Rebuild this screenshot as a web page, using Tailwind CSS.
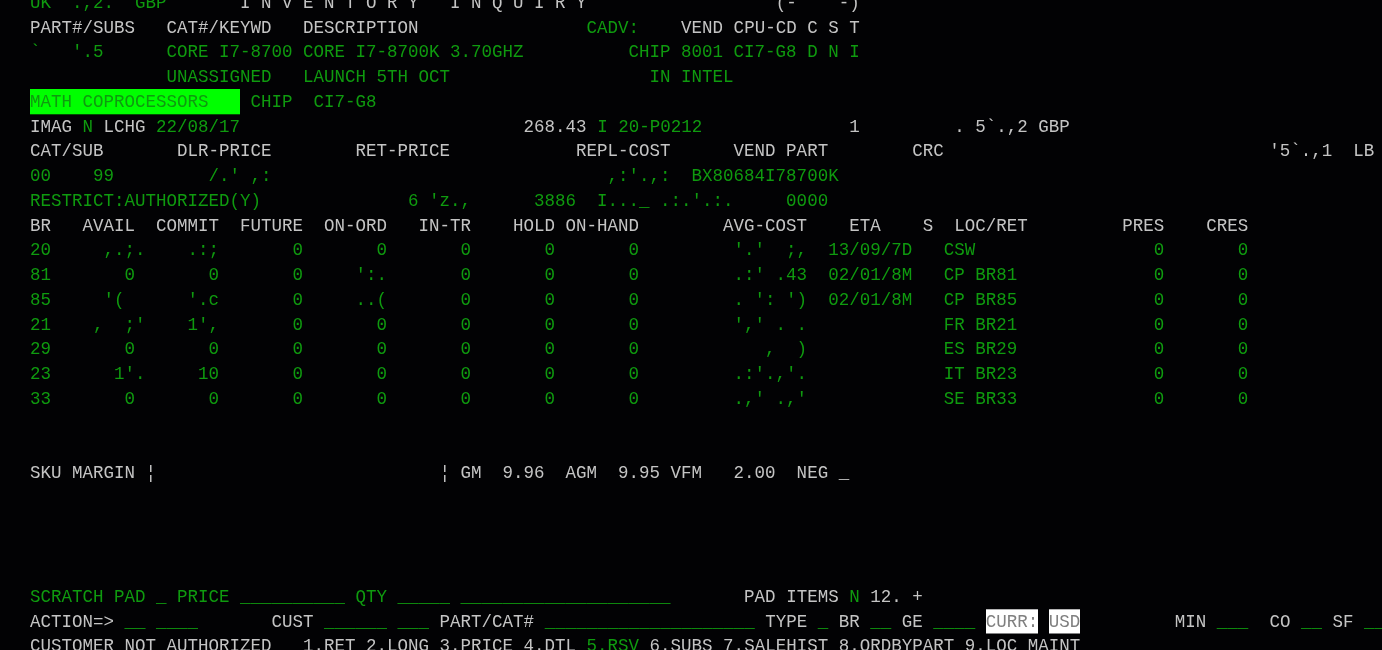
<!DOCTYPE html>
<html lang="en">
<head>
    <meta charset="UTF-8">
    <title>Inventory Inquiry</title>
    <script src="https://cdn.jsdelivr.net/npm/@tailwindcss/browser@4"></script>
</head>
<body class="bg-[#020204] h-[650px] overflow-hidden">
<pre class="pl-[30px] -mt-[10px] origin-top scale-y-[1.1] font-['Liberation_Mono',monospace] text-[17.5px] leading-[22.51px] text-[#c4c4c4] blur-[0.3px]"><span class="text-[#0f9a0f]">UK  .,2.  GBP</span>       I N V E N T O R Y   I N Q U I R Y                  (-    -)
PART#/SUBS   CAT#/KEYWD   DESCRIPTION                <span class="text-[#0f9a0f]">CADV:</span>    VEND CPU-CD C S T
<span class="text-[#0f9a0f]">`   '.5      CORE I7-8700 CORE I7-8700K 3.70GHZ          CHIP 8001 CI7-G8 D N I</span>
<span class="text-[#0f9a0f]">             UNASSIGNED   LAUNCH 5TH OCT                   IN INTEL</span>
<span class="inline-block bg-[#00ff00] text-[#0f9a0f]">MATH COPROCESSORS   </span> <span class="text-[#0f9a0f]">CHIP  CI7-G8</span>
IMAG <span class="text-[#0f9a0f]">N</span> LCHG <span class="text-[#0f9a0f]">22/08/17</span>                           268.43 <span class="text-[#0f9a0f]">I 20-P0212</span>              1         . 5`.,2 GBP
CAT/SUB       DLR-PRICE        RET-PRICE            REPL-COST      VEND PART        CRC                               '5`.,1  LB
<span class="text-[#0f9a0f]">00    99         /.' ,:                                ,:'.,:  BX80684I78700K</span>
<span class="text-[#0f9a0f]">RESTRICT:AUTHORIZED(Y)              6 'z.,      3886  I..._ .:.'.:.     0000</span>
BR   AVAIL  COMMIT  FUTURE  ON-ORD   IN-TR    HOLD ON-HAND        AVG-COST    ETA    S  LOC/RET         PRES    CRES
<span class="text-[#0f9a0f]">20     ,.;.    .:;       0       0       0       0       0         '.'  ;,  13/09/7D   CSW                 0       0</span>
<span class="text-[#0f9a0f]">81       0       0       0     ':.       0       0       0         .:' .43  02/01/8M   CP BR81             0       0</span>
<span class="text-[#0f9a0f]">85     '(      '.c       0     ..(       0       0       0         . ': ')  02/01/8M   CP BR85             0       0</span>
<span class="text-[#0f9a0f]">21    ,  ;'    1',       0       0       0       0       0         ',' . .             FR BR21             0       0</span>
<span class="text-[#0f9a0f]">29       0       0       0       0       0       0       0            ,  )             ES BR29             0       0</span>
<span class="text-[#0f9a0f]">23      1'.     10       0       0       0       0       0         .:'.,'.             IT BR23             0       0</span>
<span class="text-[#0f9a0f]">33       0       0       0       0       0       0       0         .,' .,'             SE BR33             0       0</span>


SKU MARGIN ¦                           ¦ GM  9.96  AGM  9.95 VFM   2.00  NEG _




<span class="text-[#0f9a0f]">SCRATCH PAD _ PRICE __________ QTY _____ ____________________</span>       PAD ITEMS <span class="text-[#0f9a0f]">N</span> 12. +
ACTION=> <span class="text-[#0f9a0f]">__ ____</span>       CUST <span class="text-[#0f9a0f]">______ ___</span> PART/CAT# <span class="text-[#0f9a0f]">____________________</span> TYPE <span class="text-[#0f9a0f]">_</span> BR <span class="text-[#0f9a0f]">__</span> GE <span class="text-[#0f9a0f]">____</span> <span class="inline-block bg-white text-[#808080]">CURR:</span> <span class="inline-block bg-white text-[#808080]">USD</span>         MIN <span class="text-[#0f9a0f]">___</span>  CO <span class="text-[#0f9a0f]">__</span> SF <span class="text-[#0f9a0f]">__</span>
CUSTOMER NOT AUTHORIZED   1.RET 2.LONG 3.PRICE 4.DTL <span class="text-[#0f9a0f]">5.RSV</span> 6.SUBS 7.SALEHIST 8.ORDBYPART 9.LOC MAINT</pre>
</body>
</html>
